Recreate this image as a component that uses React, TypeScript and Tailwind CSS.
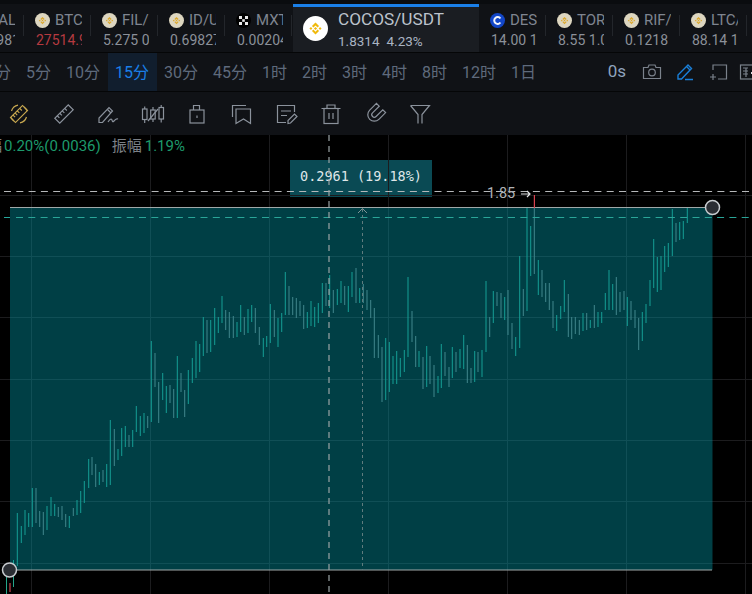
import React from "react";

type C = [number, number, number, 0 | 1];
// x, top, bottom, 1 = green, 0 = grey
const candles: C[] = [
  [6.5,577,594,1],[13.5,560,587,1],
  [17.3,513,566,1],[21.3,526,543,1],[25,510,535,1],[28.7,513,527,1],[32.3,488,527,1],[36,488,523,0],[39.7,511,527,0],[43.3,512,535,0],[47,506,530,1],[51,497,516,1],[54.7,504,516,1],[58.3,507,517,0],[62,506,520,0],[65.7,514,527,0],[69.3,516,528,1],[73.3,508,516,0],[77,500,515,1],[80.7,491,513,1],[84.3,481,503,1],[88.7,459,488,1],[92,457,475,0],[95.7,464,487,0],[99.3,472,485,1],[103,470,482,0],[106.7,464,487,1],[110.3,420,485,1],[114.3,429,466,0],[118,449,460,1],[121.7,428,456,1],[125.3,426,447,1],[129,435,447,0],[132.7,430,447,1],[136.3,406,432,1],[140.3,416,436,1],[144,413,433,1],[147.7,416,428,0],[151.3,341,422,1],[155,353,387,0],[158.7,382,423,0],[162.7,373,400,1],[166.3,386,413,1],[170,385,403,0],[173.7,389,418,0],[177.3,356,418,1],[181,373,392,0],[184.7,390,417,0],[188.3,370,404,1],[192.3,358,383,1],[196,341,378,1],[199.7,344,372,1],[203.3,317,356,1],[207,320,353,0],[210.7,320,352,1],[214.7,308,345,1],[218.3,317,333,1],[222,296,323,1],[225.7,310,330,0],[229.3,312,338,0],[233.3,316,338,0],[237,322,337,1],[240.7,305,332,1],[244.3,317,335,0],[248,309,333,1],[251.7,305,322,1],[255.3,308,333,0],[259.3,327,345,0],
  [263.3,338,357,1],[266.7,336,347,1],[270.3,304,343,1],[274.3,310,337,0],[278,318,347,1],[281.7,313,332,1],[285.3,272,315,1],[289,286,315,0],[292.7,297,315,0],[296.3,298,318,0],[300,301,316,0],[303.7,305,329,0],[307.3,312,328,1],[311,301,326,1],[314.7,307,327,1],[318.3,303,323,1],[322.3,283,313,1],[326,283,306,0],[329.7,275,308,1],[333.3,290,313,0],[337.3,289,305,1],[341,281,303,1],[344.7,286,305,0],[348.3,286,312,1],[352,272,297,1],[356,268,303,0],[359.7,288,303,1],[363.3,284,303,0],[367,290,310,0],[370.7,300,318,0],
  [374.3,308,358,0],[378.3,335,358,0],[382,347,402,0],[385.7,338,400,1],[389.3,342,392,1],[393,356,384,1],[396.7,351,384,1],[400.3,358,377,1],[404.3,350,372,1],[408,277,357,1],[412,311,342,0],[415.7,336,367,0],[419,351,367,1],[423,357,389,0],[426.7,346,387,1],[430,356,384,0],[434,365,397,0],[438,376,393,1],[441.3,344,388,1],[445,352,376,0],[449,367,387,0],[452.3,347,378,1],[456,352,372,0],[460,349,368,1],[463.7,335,369,1],[467.3,345,383,0],[471,368,383,0],[474.7,351,382,1],[478,352,372,0],[482,350,377,1],[486,281,352,1],[489.7,317,337,0],[493.3,291,323,1],[497,292,306,0],[501,293,318,0],[504.7,297,320,1],[508,290,335,0],[512,323,349,0],[515.7,337,356,1],
  [519.7,256,348,1],[523.3,289,316,0],[527,208,311,1],[530.7,226,276,1],[534.3,208,274,0],[538.3,260,295,1],[542,270,297,0],[545.7,283,302,0],[549.3,283,310,0],[553,301,328,0],[556.7,315,331,1],[560.7,306,319,1],[564.3,280,312,1],[568.3,294,337,0],[571.7,317,339,0],[575.3,317,334,0],[579.3,320,335,0],[583,313,331,1],[586.7,313,330,0],[590.3,320,328,1],[594.3,305,328,0],[598,312,327,1],[601.7,312,323,1],[605.3,293,310,1],[609,270,310,1],[612.7,284,310,1],[616.3,277,315,0],[620,292,312,0],[624,291,310,0],[627.3,297,326,1],[631,301,320,0],[635,310,328,0],[638.7,318,350,0],[642.3,312,341,1],[646,304,323,1],[650,280,306,1],[653.7,239,288,1],[657.3,257,292,1],[661,256,290,1],[664.7,246,272,1],[668.3,243,267,1],[672.3,209,256,1],[676,223,242,0],[679.7,222,240,1],[683.3,221,239,1],[687.3,208,223,1],
];

const BnbMark = ({ fill = "#f0b90b" }: { fill?: string }) => (
  <g fill={fill}>
    <path d="M12 6.2 15.4 9.6 14 11 12 9 10 11 8.6 9.6Z" />
    <path d="M12 17.8 8.6 14.4 10 13 12 15 14 13 15.4 14.4Z" />
    <path d="M6.2 12 7.6 10.6 9 12 7.6 13.4Z" />
    <path d="M17.8 12 16.4 13.4 15 12 16.4 10.6Z" />
    <path d="M12 10.5 13.5 12 12 13.5 10.5 12Z" />
  </g>
);

const Coin = ({ kind }: { kind: string }) => {
  if (kind === "mx")
    return (
      <svg width="15" height="15" viewBox="0 0 15 15">
        <rect width="15" height="15" rx="7.5" fill="#000" />
        <g fill="#e8e8e8">
          <rect x="3" y="3" width="3" height="3" />
          <rect x="9" y="3" width="3" height="3" />
          <rect x="3" y="9" width="3" height="3" />
          <rect x="9" y="9" width="3" height="3" />
          <rect x="6.2" y="6.2" width="2.6" height="2.6" />
        </g>
      </svg>
    );
  if (kind === "des")
    return (
      <svg width="15" height="15" viewBox="0 0 15 15">
        <circle cx="7.5" cy="7.5" r="7.5" fill="#1246c8" />
        <path d="M10.4 5.5A3.4 3.4 0 1 0 10.4 9.5" fill="none" stroke="#f2f4fa" strokeWidth="2" />
      </svg>
    );
  return (
    <svg width="15" height="15" viewBox="0 0 24 24">
      <circle cx="12" cy="12" r="12" fill="#ddd6c0" />
      <BnbMark fill="#dca72a" />
    </svg>
  );
};

const Ticker = ({ kind, a, b, red, cls = "" }: { kind: string; a: string; b: string; red?: boolean; cls?: string }) => (
  <div className={`relative h-full w-[67px] shrink-0 pl-[10px] pt-[7px] ${cls}`}>
    <div className="flex h-[18px] w-[47px] items-center gap-[5px] overflow-hidden">
      <span className="shrink-0"><Coin kind={kind} /></span>
      <span className="whitespace-nowrap text-[15px] leading-none text-[#7f8590]">{a}</span>
    </div>
    <div className={`mt-[3px] ml-[1px] w-[46px] overflow-hidden whitespace-nowrap text-[14px] leading-[17px] ${red ? "text-[#b53a40]" : "text-[#8b9099]"}`}>{b}</div>
    <div className="absolute right-[1px] top-[11px] h-[21px] w-px bg-[#23262b]" />
  </div>
);

const periods = ["5分", "10分", "15分", "30分", "45分", "1时", "2时", "3时", "4时", "8时", "12时", "1日"];

const Ic = ({ children, cls = "text-[#8b929c]" }: { children: React.ReactNode; cls?: string }) => (
  <svg width="24" height="24" viewBox="0 0 24 24" fill="none" stroke="currentColor" strokeWidth="1.2" className={`shrink-0 ${cls}`}>
    {children}
  </svg>
);

const tools: React.ReactNode[] = [
  <Ic key="1" cls="text-[#c8a850]">
    <g transform="rotate(-45 12 12)">
      <rect x="3.5" y="8.5" width="17" height="7" />
      <path d="M7 8.5v3M10 8.5v3M13 8.5v3M16.5 8.5v3" />
    </g>
    <path d="M4.5 9A8.5 8.5 0 0 1 11 3.2M13 20.8A8.5 8.5 0 0 0 19.5 15M20 8.5A9 9 0 0 0 17 5M4 15.5A9 9 0 0 0 7 19" />
  </Ic>,
  <Ic key="2">
    <g transform="rotate(-45 12 12)">
      <rect x="2.5" y="8.5" width="19" height="7" />
      <path d="M6 8.5v3M9.5 8.5v3M13 8.5v3M16.5 8.5v3" />
    </g>
  </Ic>,
  <Ic key="3">
    <path d="M3 20.5V16L13 5.5l3.5 3.5L6.5 20.5Z" />
    <path d="M11.5 7.5 15 11M12 20c2-3 3.5-3.5 4-2s.5 2.5 2 1 2-3 4-2" />
  </Ic>,
  <Ic key="4">
    <rect x="1.5" y="7" width="4.5" height="10.5" />
    <path d="M3.7 4.5V7M3.7 17.5V21" />
    <rect x="9.7" y="8" width="4.5" height="9" />
    <path d="M12 5v3M12 17v3" />
    <rect x="18" y="5.5" width="4.5" height="11.5" />
    <path d="M20.2 3v2.5M20.2 17v3.5M7 19 17 7" />
  </Ic>,
  <Ic key="5">
    <rect x="5" y="8" width="14" height="13" />
    <path d="M8.5 8V3.5h6V8M12 13.5v2.5" />
  </Ic>,
  <Ic key="6">
    <path d="M2.5 15V3.5H16" />
    <path d="M6 7H20.5V21.5L13.5 17 6 21.5Z" />
  </Ic>,
  <Ic key="7">
    <path d="M20.5 10V3.5H3.5V20.5H12" />
    <path d="M7 9h10M7 13.5h6" />
    <path d="M14 21.5v-3l6.5-6.5 2.5 2.5-6.5 6.5Z" />
  </Ic>,
  <Ic key="8">
    <path d="M2.5 6.5H21.5M8 6.5V3H16V6.5" />
    <rect x="5" y="6.5" width="14" height="15" />
    <path d="M10 11v6M14 11v6" />
  </Ic>,
  <Ic key="9">
    <g transform="rotate(45 12 12)">
      <path d="M5.5 3.5V13A6.5 6.5 0 0 0 18.5 13V3.5H14.5V13A2.5 2.5 0 0 1 9.5 13V3.5Z" />
    </g>
  </Ic>,
  <Ic key="10">
    <path d="M2.5 3.5H21.5L14 12.5V21.5M10 21.5V12.5L2.5 3.5" />
  </Ic>,
];

export default function App() {
  return (
    <div className="relative flex h-[594px] w-[752px] flex-col overflow-hidden bg-black font-['Roboto','Noto_Sans_CJK_SC',sans-serif]">
      {/* ticker strip */}
      <div className="h-[4px] shrink-0 bg-[#0a0c0f]" />
      <div className="flex h-[48px] shrink-0 bg-[#101216]">
        <div className="-ml-[42px] flex h-full">
          <Ticker kind="bnb" a="GAL/USDT" b="0.10981 1.2%" />
          <Ticker kind="bnb" a="BTC/USDT" b="27514.9 1.1%" red />
          <Ticker kind="bnb" a="FIL/USDT" b="5.275 0.9%" />
          <Ticker kind="bnb" a="ID/USDT" b="0.69827 1.5%" />
          <Ticker kind="mx" a="MXT/USDT" b="0.00204 1.2%" />
        </div>
        <div className="h-full w-[186px] shrink-0 border-t-[3px] border-[#1a7fe8] bg-[#1a1d22]">
          <div className="flex h-full items-center pl-[10px]">
            <svg width="25" height="25" viewBox="0 0 24 24" className="mb-[2px]">
              <circle cx="12" cy="12" r="12" fill="#fff" />
              <BnbMark />
            </svg>
            <div className="ml-[10px]">
              <div className="text-[17.2px] leading-[19px] text-[#bcc3cc]">COCOS/USDT</div>
              <div className="mt-[5px] flex gap-[7px] text-[13.5px] leading-[15px] text-[#a9b4c2]">
                <span>1.8314</span>
                <span>4.23%</span>
              </div>
            </div>
          </div>
        </div>
        <Ticker kind="des" a="DES/USDT" b="14.00 1.2%" cls="ml-[1px]" />
        <Ticker kind="bnb" a="TOR/USDT" b="8.55 1.0%" />
        <Ticker kind="bnb" a="RIF/USDT" b="0.1218 1%" />
        <Ticker kind="bnb" a="LTC/USDT" b="88.14 1.3%" />
      </div>

      {/* periods */}
      <div className="flex h-[40px] shrink-0 items-center justify-between whitespace-nowrap border-y border-[#050607] bg-[#101216] text-[16px] text-[#5f6a7c]">
        <div className="-ml-[21.5px] flex h-full items-center">
          <div className="flex h-full items-center px-[7.5px] pt-[1px]">1分</div>
          {periods.map((p) => (
            <div key={p} className={`flex h-full items-center px-[7.5px] pt-[1px] ${p === "15分" ? "bg-[#111e2e] text-[#1a7fe8]" : ""}`}>{p}</div>
          ))}
        </div>
        <div className="-mr-[7px] flex items-center">
          <span className="text-[17px] text-[#8fa3bd]">0s</span>
          <svg width="20" height="20" viewBox="0 0 20 20" fill="none" stroke="#7b828c" strokeWidth="1.2" className="ml-[16px] shrink-0">
            <path d="M1.5 5.5H6L7 3H13L14 5.5H18.5V16.5H1.5Z" />
            <circle cx="10" cy="10.5" r="3.3" />
          </svg>
          <svg width="20" height="20" viewBox="0 0 20 20" fill="none" stroke="#1a7fd8" strokeWidth="1.4" className="ml-[14px] shrink-0">
            <path d="M2 17V13L12 3 15.5 6.5 5.5 17Z" />
            <path d="M10.5 4.5 14 8M9 17.5H17" />
          </svg>
          <svg width="20" height="20" viewBox="0 0 20 20" fill="none" stroke="#7b828c" strokeWidth="1.2" className="ml-[12px] shrink-0">
            <path d="M5 8V3H18.5V17H10" />
            <path d="M2 15H8M5 12V18" />
          </svg>
          <svg width="20" height="20" viewBox="0 0 20 20" fill="none" stroke="#7b828c" strokeWidth="1.2" className="ml-[11px] shrink-0">
            <rect x="1.5" y="3" width="17" height="14" />
            <path d="M4 6h5M4 9h5M4 12h5M7 6v9" />
            <path d="M12 11h8" stroke="#d8dbe0" strokeWidth="2" />
          </svg>
        </div>
      </div>

      {/* drawing tools */}
      <div className="flex h-[43px] shrink-0 items-center bg-[#101216] pl-[7px]">
        <div className="flex items-center gap-[20.5px]">{tools}</div>
      </div>

      {/* chart */}
      <div className="relative flex-1 overflow-hidden bg-black">
        <div className="absolute left-[290px] top-[25px] flex h-[37px] w-[142px] items-start justify-center bg-[#0a4a54] pt-[8px] font-['DejaVu_Sans_Mono',monospace] text-[13.5px] font-medium leading-[16px] text-[#dfe6e8]">
          0.2961 (19.18%)
        </div>
        <svg width="752" height="459" viewBox="0 135 752 459" className="absolute left-0 top-0">
          <g stroke="#1c1c1e" strokeWidth="1">
            {[31.5, 150.5, 269.5, 388.5, 507.5, 626.5, 745.5].map((x) => (
              <line key={x} x1={x} x2={x} y1="135" y2="594" />
            ))}
            {[195.5, 256.5, 317.5, 379.5, 440.5, 501.5, 563.5].map((y) => (
              <line key={y} x1="0" x2="752" y1={y} y2={y} />
            ))}
          </g>
          {candles.map(([x, t, b, g], i) => (
            <rect key={i} x={x - 0.5} y={t} width="1" height={b - t} fill={g ? "#25a58a" : "#707c7c"} />
          ))}
          <rect x="10" y="207" width="702.5" height="363" fill="#0096a5" fillOpacity="0.42" />
          <line x1="10" x2="712" y1="207.5" y2="207.5" stroke="#a0a8a8" />
          <line x1="10" x2="712" y1="570" y2="570" stroke="#a0a8a8" />
          <rect x="533.8" y="195" width="1.2" height="13" fill="#d8434f" />
          <rect x="9.4" y="583" width="1.2" height="9" fill="#c8434f" />
          <line x1="4" x2="752" y1="191.5" y2="191.5" stroke="#b6b8ba" strokeDasharray="7 5.3" />
          <line x1="4" x2="10" y1="217.5" y2="217.5" stroke="#26a69a" />
          <line x1="16" x2="752" y1="217.5" y2="217.5" stroke="#2aa598" strokeDasharray="7 5.3" />
          <line x1="329" x2="329" y1="135" y2="594" stroke="#9aa3a5" strokeWidth="1.2" strokeDasharray="6 5" />
          <line x1="362.5" x2="362.5" y1="209" y2="570" stroke="#5f7c7e" strokeDasharray="3 3" />
          <path d="M358 213 362.5 208.5 367 213" fill="none" stroke="#7f9496" />
          <path d="M521 194H530M527 191 530 194 527 197" fill="none" stroke="#e4e6e8" strokeWidth="1.2" />
          <circle cx="712.5" cy="207.5" r="7" fill="#2a2d33" stroke="#c8ccd0" strokeWidth="1.5" />
          <circle cx="9.5" cy="570" r="7" fill="#2a2d33" stroke="#c8ccd0" strokeWidth="1.5" />
        </svg>
        <div className="absolute left-[487px] top-[50px] text-[14.5px] leading-[17px] text-[#b0b3b6]">1.85</div>
        <div className="relative flex h-[22px] items-center whitespace-nowrap text-[15px]">
          <div className="-ml-[13px] flex items-center gap-[2px]">
            <span className="text-[#7c8187]">幅</span>
            <span className="text-[#1d9a6c]">0.20%(0.0036)</span>
            <span className="ml-[9px] text-[#7c8187]">振幅</span>
            <span className="ml-[1px] text-[#1d9a6c]">1.19%</span>
          </div>
        </div>
      </div>
    </div>
  );
}
